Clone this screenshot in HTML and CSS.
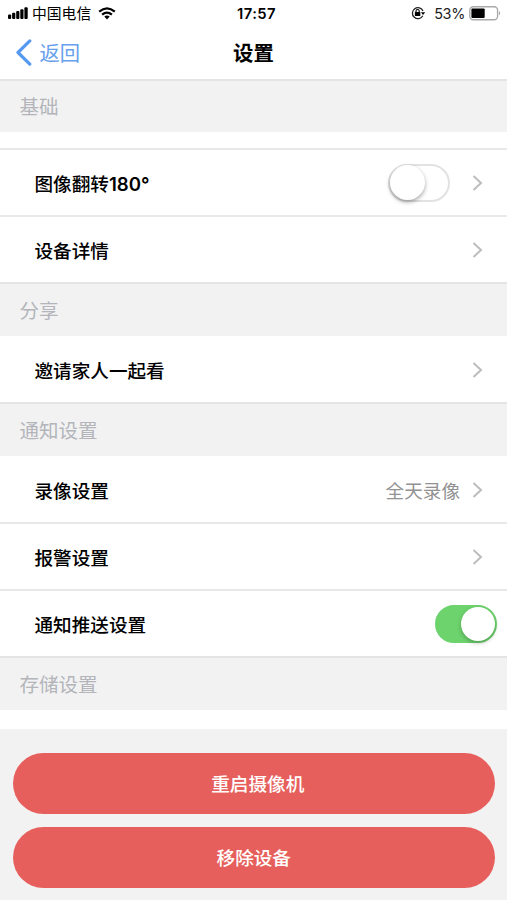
FILE: index.html
```html
<!DOCTYPE html>
<html lang="zh-CN">
<head>
<meta charset="utf-8">
<meta name="viewport" content="width=device-width, initial-scale=1">
<title>设置</title>
<link rel="stylesheet" href="styles.css">
</head>
<body>
<div class="status">
  <div class="status-left">
    <svg class="signal" width="20" height="13" viewBox="0 0 20 13"><rect x="0" y="7.5" width="3.2" height="4.5" rx="1"/><rect x="4.1" y="5.8" width="3.2" height="6.2" rx="1"/><rect x="8.2" y="4" width="3.2" height="8" rx="1"/><rect x="12.3" y="2.2" width="3.2" height="9.8" rx="1"/><rect x="16.4" y="0.2" width="3.3" height="11.8" rx="1"/></svg>
    <span class="carrier">中国电信</span>
    <svg class="wifi" width="18" height="13" viewBox="0 0 18 13"><g fill="none" stroke="#000" stroke-width="2.2"><path d="M1.2 4.7Q9-2 16.8 4.7"/><path d="M4.1 7.7Q9 3.5 13.9 7.7"/></g><path d="M6.3 9.6Q9 7.6 11.7 9.6L9 12.4Z"/></svg>
  </div>
  <time class="clock">17:57</time>
  <div class="status-right">
    <svg width="15" height="14" viewBox="0 0 15 14"><path d="M11.8 9.7A5.5 5.5 0 1 1 12 5" fill="none" stroke="#222" stroke-width="1.3"/><path d="M9.9 6.2H14.2L12 9Z"/><rect x="3.9" y="6.1" width="5.4" height="4" rx=".5"/><path d="M5 6.3V5Q5 3.5 6.6 3.5T8.2 5V6.3" fill="none" stroke="#000" stroke-width="1.1"/></svg>
    <span class="percent">53%</span>
    <svg width="32" height="15" viewBox="0 0 32 15"><rect x=".8" y=".8" width="27.8" height="12.9" rx="3.5" fill="#fff" stroke="#aaa" stroke-width="1.4"/><rect x="2.4" y="2.5" width="13.3" height="9.5" rx="1"/><path d="M30 5Q32 7.2 30 9.4Z" fill="#999"/></svg>
  </div>
</div>
<header class="nav">
  <a class="back"><svg width="17" height="27" viewBox="0 0 17 27"><path d="M14.8 1.9L3 13.5L14.8 25.1" fill="none" stroke="#559af0" stroke-width="3.2" stroke-linecap="round" stroke-linejoin="round"/></svg><span>返回</span></a>
  <h1>设置</h1>
</header>
<main>
  <h2 class="section first">基础</h2>
  <div class="spacer"></div>
  <div class="row"><span class="label">图像翻转<b>180°</b></span><span class="switch"><i></i></span><svg class="chevron" viewBox="0 0 12 18"><path d="M2.5 2L10 9L2.5 16"/></svg></div>
  <div class="row"><span class="label">设备详情</span><svg class="chevron" viewBox="0 0 12 18"><path d="M2.5 2L10 9L2.5 16"/></svg></div>
  <h2 class="section">分享</h2>
  <div class="row plain"><span class="label">邀请家人一起看</span><svg class="chevron" viewBox="0 0 12 18"><path d="M2.5 2L10 9L2.5 16"/></svg></div>
  <h2 class="section">通知设置</h2>
  <div class="row plain"><span class="label">录像设置</span><span class="value">全天录像</span><svg class="chevron" viewBox="0 0 12 18"><path d="M2.5 2L10 9L2.5 16"/></svg></div>
  <div class="row"><span class="label">报警设置</span><svg class="chevron" viewBox="0 0 12 18"><path d="M2.5 2L10 9L2.5 16"/></svg></div>
  <div class="row"><span class="label">通知推送设置</span><span class="switch on"><i></i></span></div>
  <h2 class="section">存储设置</h2>
</main>
<footer class="actions">
  <button class="restart">重启摄像机</button>
  <button>移除设备</button>
</footer>
</body>
</html>
```
FILE: styles.css
```css
* { box-sizing: border-box; }
body {
  margin: 0;
  height: 900px;
  display: flex;
  flex-direction: column;
  overflow: hidden;
  background: #fff;
  color: #000;
  font-family: Inter, "Noto Sans CJK SC", sans-serif;
}
svg { display: block; flex: none; }
.status {
  height: 28px;
  padding: 0 6px 0 8px;
  display: grid;
  grid-template-columns: 1fr auto 1fr;
  align-items: center;
  font-size: 14.8px;
  line-height: 28px;
}
.status-left, .status-right { display: flex; align-items: center; }
.status-left svg, .status-right svg { margin-top: -2px; }
.carrier { margin-left: 4px; }
.status-left .wifi { margin-left: 7px; }
.clock { padding-left: 4px; font-weight: 600; font-size: 14.8px; letter-spacing: .4px; }
.status-right { justify-content: flex-end; color: #222; }
.percent { margin: 0 4px 0 8px; font-size: 14.4px; letter-spacing: -.3px; }
.nav {
  height: 51px;
  position: relative;
  display: flex;
  align-items: center;
  justify-content: center;
}
.nav h1 { margin: 0; font-size: 20.4px; line-height: 30px; font-weight: 700; }
.back {
  position: absolute;
  left: 15px;
  top: 0;
  height: 48px;
  display: flex;
  align-items: center;
  gap: 7.5px;
  color: #67a0ed;
  font-size: 20.3px;
}
.back span { margin-top: -1px; }
.section {
  margin: 0;
  height: 54px;
  padding-left: 19.5px;
  border-top: 2px solid #e4e4e5;
  background: #f2f2f2;
  color: #b3b5bb;
  font-size: 19.5px;
  font-weight: 400;
  line-height: 55px;
}
.section.first { height: 53px; line-height: 53px; }
.spacer { height: 16px; }
.row {
  height: 67px;
  padding: 0 24px 0 34.5px;
  border-top: 2px solid #e8e8e8;
  display: flex;
  align-items: center;
}
.row.plain { height: 66px; border-top-color: transparent; }
.label {
  flex: 1;
  font-size: 18.6px;
  font-weight: 500;
}
.label b { font-weight: 600; }
.value { color: #929292; font-size: 18.6px; margin-right: 11px; }
.row.plain .label, .row.plain .value { padding-bottom: 2px; }
.chevron { width: 12px; height: 18px; fill: none; stroke: #bdbdbd; stroke-width: 2; }
.switch {
  width: 62px;
  height: 38px;
  margin-right: 21px;
  padding: 2px;
  border: 2px solid #e2e2e2;
  border-radius: 19px;
  display: flex;
  align-items: center;
}
.switch i {
  width: 35px;
  height: 35px;
  margin-left: -2px;
  flex: none;
  border-radius: 50%;
  background: #fff;
  box-shadow: 0 2px 4px rgba(0, 0, 0, .35);
}
.switch.on {
  margin-right: -14px;
  justify-content: flex-end;
  background: #6dd36d;
  border-color: #6dd36d;
}
.switch.on i { width: 34px; height: 34px; margin: 0 -2px 0 0; box-shadow: 0 2px 4px rgba(0, 0, 0, .25); }
.actions {
  margin-top: 19px;
  flex: 1;
  padding: 24px 12.5px 0 13px;
  background: #f2f2f2;
  display: flex;
  flex-direction: column;
  gap: 12.5px;
}
.actions button {
  height: 61px;
  flex: none;
  border: 0;
  padding: 0 0 2px;
  border-radius: 31px;
  background: #e75f5c;
  color: #fff;
  font: 500 18.6px Inter, "Noto Sans CJK SC", sans-serif;
}
.actions .restart { padding-left: 8px; }
```
